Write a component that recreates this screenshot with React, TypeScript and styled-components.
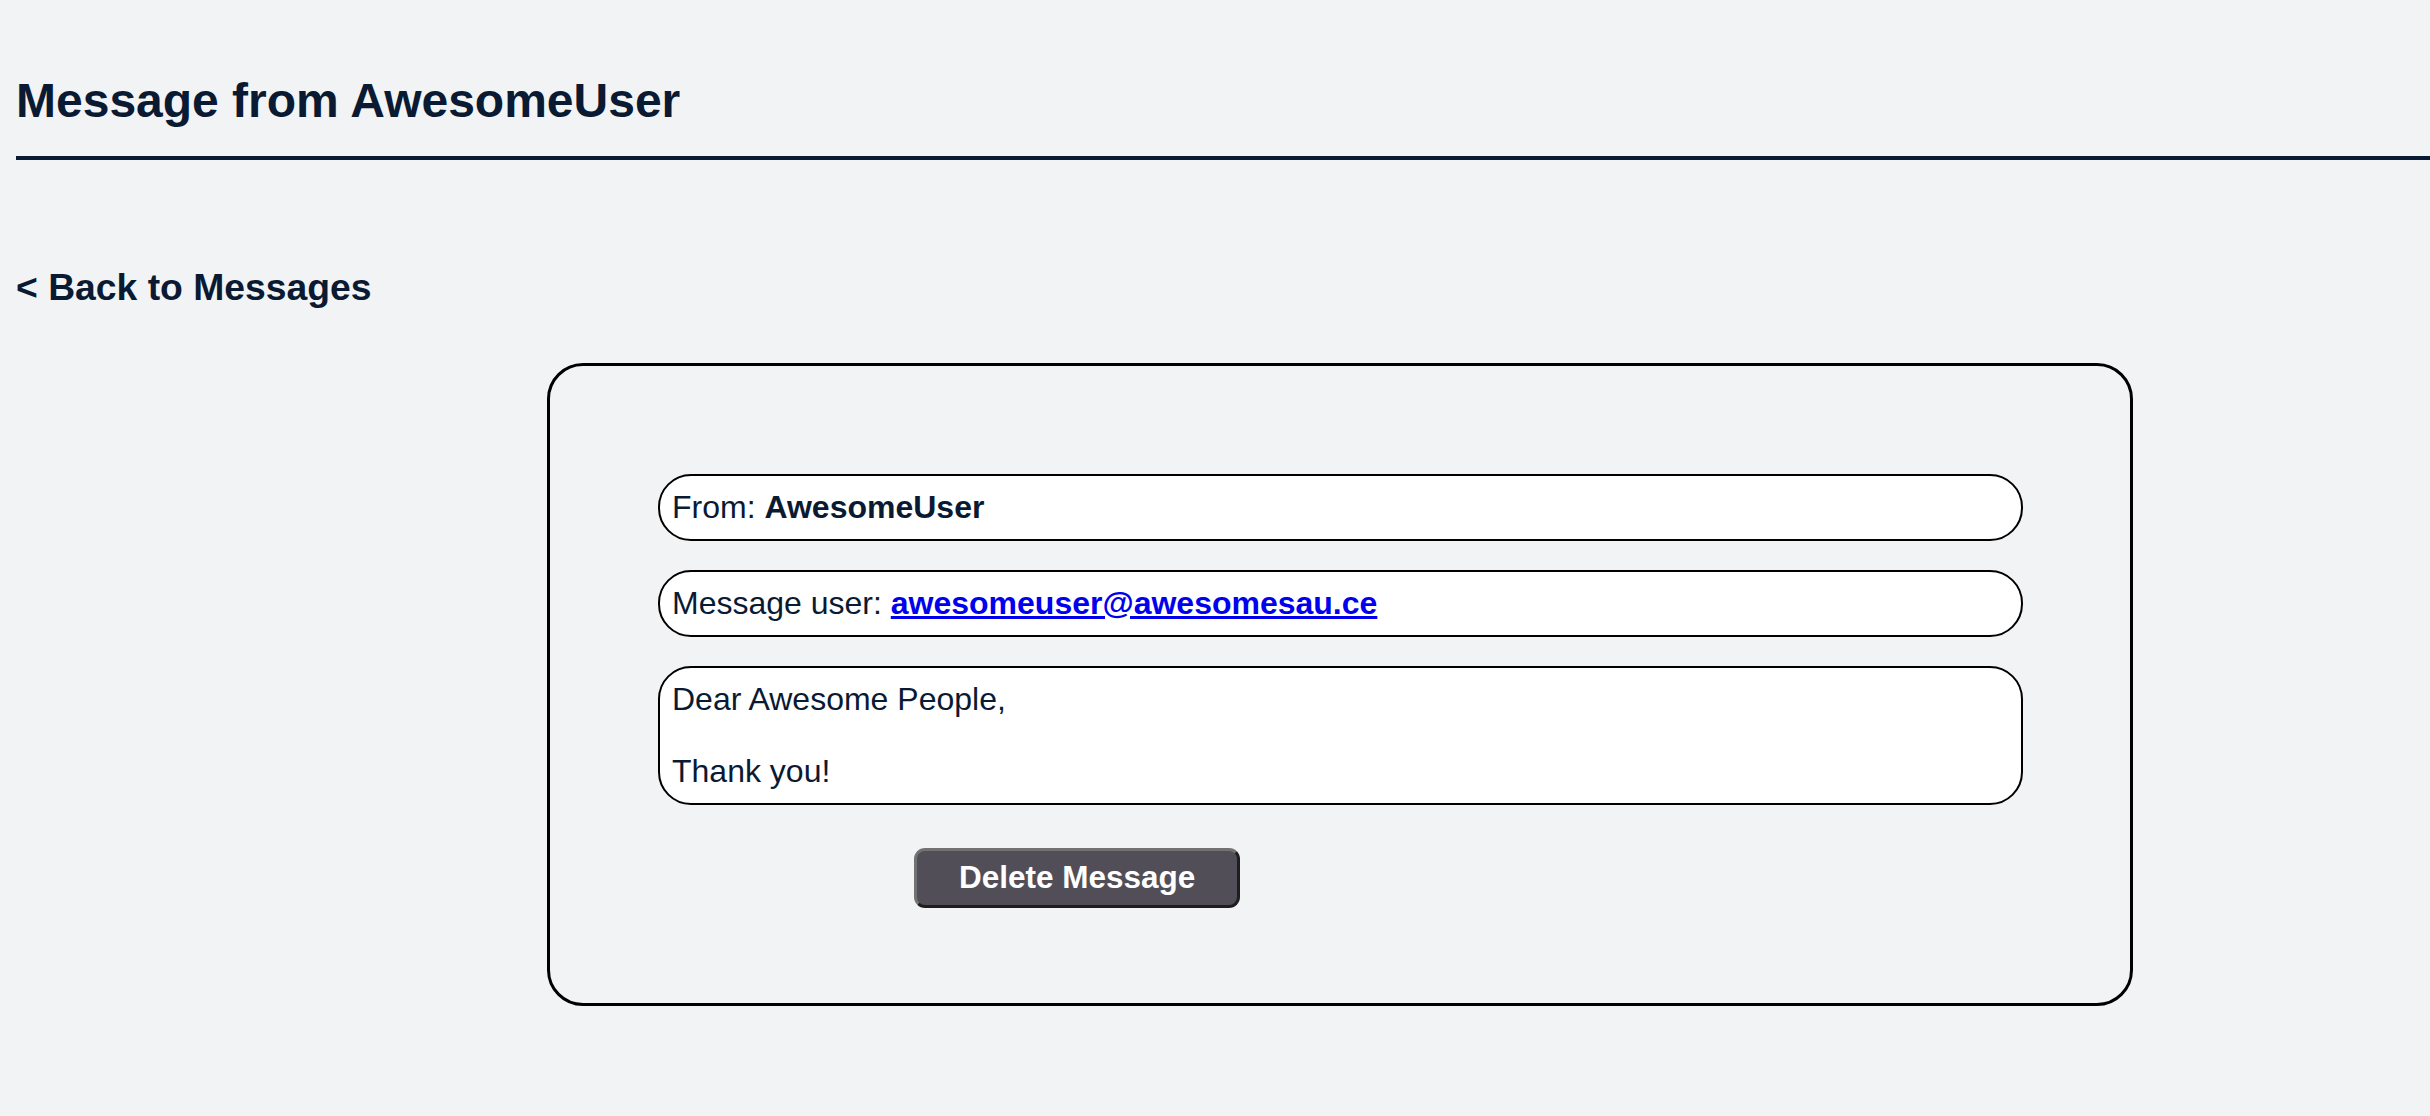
import React from "react";
import styled, { createGlobalStyle } from "styled-components";

const Global = createGlobalStyle`
  html, body {
    margin: 0;
    padding: 0;
    background: #f2f3f5;
  }
  body {
    font-family: "Liberation Sans", Arial, sans-serif;
    color: #0a1a33;
  }
`;

const Page = styled.div`
  display: flex;
  flex-direction: column;
  padding-top: 73px;
  padding-bottom: 80px;
`;

const Header = styled.header`
  margin-left: 16px;
  padding-bottom: 28px;
  border-bottom: 4px solid #0a1a33;
`;

const Title = styled.h1`
  margin: 0;
  font-size: 48px;
  font-weight: 700;
  line-height: normal;
  color: #0a1a33;
`;

const BackLink = styled.a`
  align-self: flex-start;
  margin: 106px 0 0 16px;
  font-size: 37.3px;
  font-weight: 700;
  line-height: normal;
  color: #0a1a33;
  text-decoration: none;
  cursor: pointer;
`;

const Card = styled.section`
  box-sizing: border-box;
  width: 1586px;
  margin: 54px 0 0 547px;
  padding: 108px 107px 95px 108px;
  border: 3px solid #000;
  border-radius: 36px;
  display: flex;
  flex-direction: column;
  gap: 29px;
`;

const Field = styled.div<{ $multiline?: boolean }>`
  box-sizing: border-box;
  background: #fff;
  border: 2px solid #000;
  border-radius: 33px;
  padding: ${(p) => (p.$multiline ? "13px 12px 14px" : "13px 12px")};
  font-size: 32px;
  line-height: ${(p) => (p.$multiline ? "36px" : "normal")};
  white-space: ${(p) => (p.$multiline ? "pre-wrap" : "normal")};
  color: #0a1a33;
`;

const Strong = styled.strong`
  font-weight: 700;
`;

const MailLink = styled.a`
  color: #0000ee;
  font-weight: 700;
  text-decoration: underline;
`;

const DeleteButton = styled.button`
  align-self: flex-start;
  margin: 14px 0 0 256px;
  padding: 8px 42px 9px;
  font-family: "Liberation Sans", Arial, sans-serif;
  font-size: 31.5px;
  font-weight: 700;
  line-height: normal;
  color: #fff;
  background: #524e57;
  border: 3px solid;
  border-color: #727272 #1e1e1e #1e1e1e #727272;
  border-radius: 11px;
  cursor: pointer;
`;

export default function App() {
  return (
    <>
      <Global />
      <Page>
        <Header>
          <Title>Message from AwesomeUser</Title>
        </Header>
        <BackLink href="#">&lt; Back to Messages</BackLink>
        <Card>
          <Field>
            From: <Strong>AwesomeUser</Strong>
          </Field>
          <Field>
            Message user:{" "}
            <MailLink href="mailto:awesomeuser@awesomesau.ce">
              awesomeuser@awesomesau.ce
            </MailLink>
          </Field>
          <Field $multiline>{"Dear Awesome People,\n\nThank you!"}</Field>
          <DeleteButton type="button">Delete Message</DeleteButton>
        </Card>
      </Page>
    </>
  );
}
